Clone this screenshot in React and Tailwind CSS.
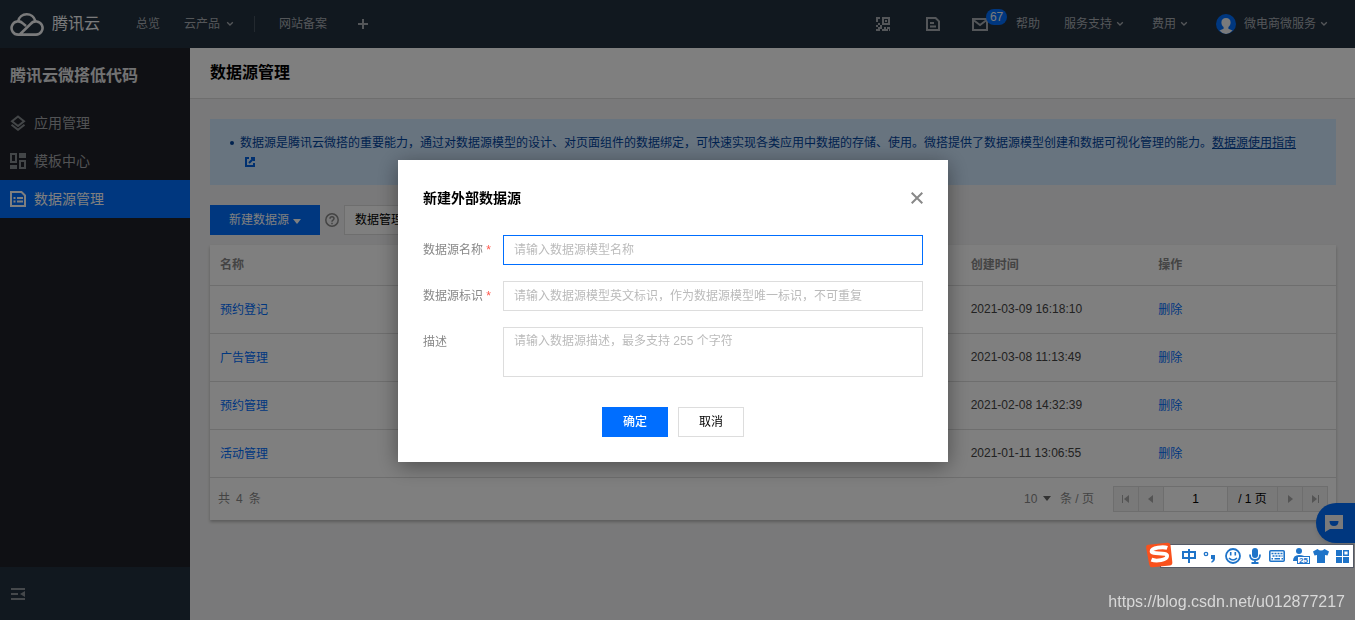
import { useState } from "react";

const rows = [
    { name: "预约登记", time: "2021-03-09 16:18:10" },
    { name: "广告管理", time: "2021-03-08 11:13:49" },
    { name: "预约管理", time: "2021-02-08 14:32:39" },
    { name: "活动管理", time: "2021-01-11 13:06:55" },
];

function Chevron() {
    return (
        <svg width="8" height="6" viewBox="0 0 8 6" fill="none" stroke="currentColor" strokeWidth="1.3">
            <path d="M1.2 1.2 4 4l2.8-2.8" />
        </svg>
    );
}

function CloudLogo() {
    return (
        <svg width="34" height="26" viewBox="0 0 34 26" fill="none" stroke="currentColor" strokeWidth="2.6">
            <path d="M10 23.2 20.7 13a6.6 6.6 0 1 1 4.8 10.6H8.2A6.6 6.6 0 1 1 12.9 12.4L16 15" />
            <path d="M8.2 10.2a8.8 8.8 0 0 1 17.1-.4" />
        </svg>
    );
}

function QrIcon() {
    return (
        <svg width="14" height="14" viewBox="0 0 14 14" fill="currentColor">
            <path d="M0 0h4v2H2v3H0zM6 0h8v8H6zm2 2v4h4V2z" fillRule="evenodd" />
            <path d="M9 3h2v2H9zM2 6h2v2H2zM0 8h2v2H0zM4 8h2v2H4zM2 10h4v2H4v2H0v-2h2zM8 10h2v2h2v2H6v-2h2zM11 10h3v4h-1v-2h-2z" />
        </svg>
    );
}

function DocIcon() {
    return (
        <svg width="14" height="14" viewBox="0 0 14 14" fill="none" stroke="currentColor" strokeWidth="2">
            <path d="M1 1h8.6L13 4.4V13H1z" />
            <path d="M4 6h4M4 9.5h6" />
        </svg>
    );
}

function MailIcon() {
    return (
        <svg width="16" height="14" viewBox="0 0 16 14" fill="none" stroke="currentColor" strokeWidth="2">
            <path d="M1 2h14v11H1z" />
            <path d="m2 3.5 6 4.5 6-4.5" />
        </svg>
    );
}

function Avatar() {
    return (
        <svg width="20" height="20" viewBox="0 0 20 20">
            <circle cx="10" cy="10" r="10" fill="#006eff" />
            <path
                d="M10 4c2.9 0 4.6 1.8 4.6 4.4 0 2.1-1 3.7-2.2 4.6v1.8l4.2 1.8A10 10 0 0 1 10 20a10 10 0 0 1-6.6-3.4l4.2-1.8V13c-1.2-.9-2.2-2.5-2.2-4.6C5.400 5.800 7.100 4 10 4z"
                fill="#f4f5f6"
            />
        </svg>
    );
}

function AppsIcon() {
    return (
        <svg width="16" height="16" viewBox="0 0 16 16" fill="none" stroke="#878c90" strokeWidth="2">
            <path d="M8 1.500 14 6.200 8 11 2 6.200z" />
            <path d="M1.500 9.800 8 14.800l6.500-5" />
        </svg>
    );
}

function TemplateIcon() {
    return (
        <svg width="16" height="16" viewBox="0 0 16 16" fill="#878c90">
            <path d="M0 0h7v10H0zm2 2v6h3V2zM9 0h7v5H9zM0 12h7v4H0zM9 7h7v9H9zm2 2v5h3V9z" fillRule="evenodd" />
        </svg>
    );
}

function DataIcon() {
    return (
        <svg width="16" height="16" viewBox="0 0 16 16" fill="none" stroke="currentColor" strokeWidth="2">
            <path d="M1 1h10.500L15 4.500V15H1z" />
            <path d="M3.500 7h2M7 7h6M3.500 10.500h2M7 10.500h6" />
        </svg>
    );
}

function Header() {
    return (
        <header className="flex h-12 items-center bg-[#22303e] pr-[27px] pl-2.5 text-xs text-[#a8adb3]">
            <a href="#" className="flex items-center gap-2 text-base text-[#f4f5f6]">
                <CloudLogo />
                腾讯云
            </a>
            <nav className="ml-9 flex items-center gap-6">
                <a href="#">总览</a>
                <a href="#" className="flex items-center gap-1.5">
                    云产品
                    <Chevron />
                </a>
                <span className="-ml-1 h-4 w-px bg-[#47525e]" />
                <a href="#">网站备案</a>
                <button type="button" aria-label="添加" className="ml-1.5">
                    <svg width="12" height="12" viewBox="0 0 12 12" stroke="currentColor" strokeWidth="2">
                        <path d="M6 1v10M1 6h10" />
                    </svg>
                </button>
            </nav>
            <div className="ml-auto flex items-center">
                <button type="button" aria-label="二维码" className="mr-9">
                    <QrIcon />
                </button>
                <button type="button" aria-label="文档" className="mr-8">
                    <DocIcon />
                </button>
                <button type="button" aria-label="消息" className="relative mr-7">
                    <MailIcon />
                    <span className="absolute -top-2 left-3.5 h-4 rounded-full bg-[#006eff] px-1 leading-4 text-[#f4f5f6]">
                        67
                    </span>
                </button>
                <a href="#" className="mr-6">
                    帮助
                </a>
                <a href="#" className="mr-7 flex items-center gap-1">
                    服务支持
                    <Chevron />
                </a>
                <a href="#" className="mr-7 flex items-center gap-1">
                    费用
                    <Chevron />
                </a>
                <a href="#" className="flex items-center gap-1">
                    <span className="mr-1">
                        <Avatar />
                    </span>
                    微电商微服务
                    <Chevron />
                </a>
            </div>
        </header>
    );
}

function SideItem({ icon, label, active }) {
    return (
        <a
            href="#"
            className={
                active
                    ? "flex h-[38px] items-center gap-2 bg-[#006eff] px-2.5 text-white"
                    : "flex h-[38px] items-center gap-2 px-2.5 text-[#a4a6aa]"
            }
        >
            {icon}
            {label}
        </a>
    );
}

function Sidebar() {
    return (
        <aside className="flex w-[190px] shrink-0 flex-col bg-[#1e2028] text-sm">
            <h2 className="flex h-14 items-center px-2.5 text-base font-bold text-[#e4e5e7]">腾讯云微搭低代码</h2>
            <SideItem icon={<AppsIcon />} label="应用管理" />
            <SideItem icon={<TemplateIcon />} label="模板中心" />
            <SideItem icon={<DataIcon />} label="数据源管理" active />
            <div className="mt-auto flex h-[53px] items-center bg-[#22303e] px-[11px] text-[#8a9097]">
                <button type="button" aria-label="收起">
                    <svg width="14" height="12" viewBox="0 0 14 12" fill="currentColor">
                        <path d="M0 0h14v2H0zM0 5h7v2H0zM0 10h14v2H0zM14 3v6L9 6z" />
                    </svg>
                </button>
            </div>
        </aside>
    );
}

function Notice() {
    return (
        <div className="bg-[#d0e8ff] px-[30px] py-[15px] text-xs leading-[18px] text-[#00449e]">
            <div className="relative">
                <span className="absolute top-[7px] -left-2.5 size-1 rounded-full bg-[#00449e]" />
                数据源是腾讯云微搭的重要能力，通过对数据源模型的设计、对页面组件的数据绑定，可快速实现各类应用中数据的存储、使用。微搭提供了数据源模型创建和数据可视化管理的能力。
                <a href="#" className="underline">
                    数据源使用指南
                </a>
                <svg className="mx-[5px] inline-block text-[#0060e0]" width="10" height="10" viewBox="0 0 10 10" fill="none" stroke="currentColor" strokeWidth="2">
                    <path d="M4 1H1v8h8V6" />
                    <path d="M6 1h3v3M9 1 4 6" />
                </svg>
            </div>
        </div>
    );
}

function PageButton({ label, d }) {
    return (
        <button type="button" aria-label={label} className="flex w-[25px] items-center justify-center border-r border-[#ddd] text-[#a8a8a8]">
            <svg width="10" height="10" viewBox="0 0 10 10" fill="currentColor">
                <path d={d} />
            </svg>
        </button>
    );
}

function Pagination() {
    return (
        <div className="flex items-center justify-between px-2 py-2 text-xs text-[#888]">
            <span className="flex gap-1.5">
                <span>共</span>
                <span>4</span>
                <span>条</span>
            </span>
            <div className="flex items-center">
                <label className="relative mr-[19px] flex items-center">
                    <select className="mr-1 w-8 appearance-none" defaultValue="10">
                        <option>10</option>
                    </select>
                    <svg className="pointer-events-none absolute left-[19px]" width="8" height="5" viewBox="0 0 8 5" fill="#666">
                        <path d="M0 0h8L4 5z" />
                    </svg>
                    条 / 页
                </label>
                <div className="flex h-[26px] border border-r-0 border-[#ddd] bg-[#f2f2f2]">
                    <PageButton label="首页" d="M1 1h1v8H1zM8 1v8L3 5z" />
                    <PageButton label="上一页" d="M7 1v8L2 5z" />
                    <input aria-label="页码" defaultValue="1" className="w-16 border-r border-[#ddd] bg-white text-center text-black" />
                    <span className="flex w-[50px] items-center justify-center border-r border-[#ddd] text-black">/ 1 页</span>
                    <PageButton label="下一页" d="M3 1v8l5-4z" />
                    <PageButton label="末页" d="M8 1h1v8H8zM2 1v8l5-4z" />
                </div>
            </div>
        </div>
    );
}

function DataTable() {
    return (
        <div className="mt-2.5 bg-white text-xs shadow-[0_2px_3px_0_rgba(0,0,0,0.25)]">
            <table className="w-full table-fixed border-collapse text-left">
                <thead>
                    <tr className="h-10 border-b border-[#ddd] text-[#888]">
                        <th className="w-2/3 px-2.5 font-bold">名称</th>
                        <th className="w-1/6 px-2.5 font-bold">创建时间</th>
                        <th className="w-1/6 px-2.5 font-bold">操作</th>
                    </tr>
                </thead>
                <tbody>
                    {rows.map((row) => (
                        <tr key={row.name} className="h-12 border-b border-[#ddd]">
                            <td className="px-2.5 pt-0.5">
                                <a href="#" className="text-[#006eff]">
                                    {row.name}
                                </a>
                            </td>
                            <td className="px-2.5 text-[#444]">{row.time}</td>
                            <td className="px-2.5 pt-0.5">
                                <button type="button" className="text-[#006eff]">
                                    删除
                                </button>
                            </td>
                        </tr>
                    ))}
                </tbody>
            </table>
            <Pagination />
        </div>
    );
}

function CreateDialog() {
    const [form, setForm] = useState({ name: "", id: "", desc: "" });
    const set = (key) => (e) => setForm({ ...form, [key]: e.target.value });

    return (
        <div className="fixed inset-0 z-10 flex items-center justify-center bg-black/50 pt-0.5 pr-[9px]">
            <form
                role="dialog"
                aria-labelledby="dialog-title"
                onSubmit={(e) => e.preventDefault()}
                className="w-[550px] bg-white p-[25px] text-xs text-[#888] shadow-[0_4px_20px_rgba(0,0,0,0.4)]"
            >
                <div className="mb-6 flex h-[26px] items-center justify-between">
                    <h3 id="dialog-title" className="text-sm font-bold text-black">
                        新建外部数据源
                    </h3>
                    <button type="button" aria-label="关闭">
                        <svg width="12" height="12" viewBox="0 0 12 12" stroke="#888" strokeWidth="2">
                            <path d="m.700.700 10.600 10.600M11.300.700.700 11.300" />
                        </svg>
                    </button>
                </div>
                <div className="flex flex-col gap-4">
                    <div className="flex">
                        <label htmlFor="name" className="w-20 leading-[30px]">
                            数据源名称 <span className="text-[#ff584c]">*</span>
                        </label>
                        <input
                            id="name"
                            value={form.name}
                            onChange={set("name")}
                            placeholder="请输入数据源模型名称"
                            className="h-[30px] flex-1 border border-[#006eff] px-2.5 outline-none placeholder:text-[#bbb]"
                        />
                    </div>
                    <div className="flex">
                        <label htmlFor="id" className="w-20 leading-[30px]">
                            数据源标识 <span className="text-[#ff584c]">*</span>
                        </label>
                        <input
                            id="id"
                            value={form.id}
                            onChange={set("id")}
                            placeholder="请输入数据源模型英文标识，作为数据源模型唯一标识，不可重复"
                            className="h-[30px] flex-1 border border-[#ddd] px-2.5 outline-none placeholder:text-[#bbb]"
                        />
                    </div>
                    <div className="flex">
                        <label htmlFor="desc" className="w-20 leading-[30px]">
                            描述
                        </label>
                        <textarea
                            id="desc"
                            value={form.desc}
                            onChange={set("desc")}
                            placeholder="请输入数据源描述，最多支持 255 个字符"
                            className="h-[50px] flex-1 resize-none border border-[#ddd] px-2.5 py-1 leading-[18px] outline-none placeholder:text-[#bbb]"
                        />
                    </div>
                </div>
                <div className="mt-[30px] flex justify-center gap-2.5">
                    <button type="submit" className="h-[30px] w-[66px] bg-[#006eff] font-medium text-white">
                        确定
                    </button>
                    <button type="button" className="h-[30px] w-[66px] border border-[#ddd] text-black">
                        取消
                    </button>
                </div>
            </form>
        </div>
    );
}

function InputBar() {
    return (
        <div className="fixed right-px bottom-[52px] z-20 flex h-6 items-center border border-[#555a66] bg-white pr-1 pl-5 text-[#1f74c9]">
            <svg className="absolute -top-1 -left-4" width="30" height="29" viewBox="0 0 30 29">
                <g transform="rotate(-6 15 14)">
                    <path d="M4.500 2.500h19q3 0 3 3v17q0 3-3 3h-17q-3 0-3.200-3L2 5.500q-.2-3 2.500-3z" fill="#f9511d" />
                    <path d="M23 7.700c-4-1.900-15.500-1.800-16 1.800s15.500 2 15 6.200-11.500 4.400-16 2" fill="none" stroke="#fff" strokeWidth="3.800" />
                </g>
            </svg>
            <svg width="168" height="20" viewBox="0 0 168 20" fill="none" stroke="currentColor" strokeWidth="2">
                <path d="M2 6h12v6H2zM8 3v14" />
                <circle cx="25" cy="8" r="1.700" strokeWidth="1.300" />
                <path d="M30 9h4v3.500q0 3-3.300 4.200l-.6-.9q1.600-.8 1.700-2.800H30z" fill="currentColor" stroke="none" />
                <circle cx="52" cy="10" r="7" strokeWidth="1.800" />
                <path d="M49.700 6v3.500M54.300 6v3.500M48 12q4 4 8 0" strokeWidth="1.600" />
                <rect x="71" y="2" width="6" height="10" rx="3" fill="currentColor" stroke="none" />
                <path d="M69 8.500q0 5.500 5 5.500t5-5.500M74 14v3M70.500 17h7" strokeWidth="1.800" />
                <rect x="88.800" y="4.800" width="14.400" height="10.400" rx="1" strokeWidth="1.600" />
                <path d="M90.500 7.500h11M91.500 10h10" strokeWidth="1.500" strokeDasharray="2 1" />
                <path d="M90.500 12.700h1.500M93.500 12.700h5.500M100.500 12.700h1.500" strokeWidth="1.500" />
                <circle cx="118" cy="5" r="3" fill="currentColor" stroke="none" />
                <path d="M112 15q0-6 6-6t6 3v3z" fill="currentColor" stroke="none" />
                <rect x="116.500" y="10.500" width="12" height="7" fill="#fff" strokeWidth="1" />
                <text x="118" y="17" fontSize="8" fontWeight="bold" fill="currentColor" stroke="none">
                    25
                </text>
                <path d="M136.500 3q3.500 3 7 0l4.500 2.500-1.500 4-2.500-.5v8h-8V9l-2.500.5-1.500-4z" fill="currentColor" stroke="none" />
                <path d="M155 4h6v6h-6zM155 11h6v6h-6zM162 11h6v6h-6z" fill="currentColor" stroke="none" />
                <path d="M162.700 4.700h4.600v4.600h-4.600z" strokeWidth="1.400" />
            </svg>
        </div>
    );
}

export default function App() {
    return (
        <div className="flex min-h-screen flex-col bg-[#f3f3f4] font-['Liberation_Sans','Noto_Sans_CJK_SC',sans-serif]">
            <Header />
            <div className="flex flex-1">
                <Sidebar />
                <main className="min-w-0 flex-1">
                    <div className="flex h-[51px] items-center border-b border-[#ddd] bg-white px-5">
                        <h1 className="text-base font-bold text-black">数据源管理</h1>
                    </div>
                    <div className="py-5 pr-[19px] pl-5">
                        <Notice />
                        <div className="mt-5 flex items-center text-xs">
                            <button type="button" className="flex h-[30px] w-[110px] items-center justify-center gap-1 bg-[#006eff] text-white">
                                新建数据源
                                <svg className="mt-0.5" width="8" height="5" viewBox="0 0 8 5" fill="currentColor">
                                    <path d="M0 0h8L4 5z" />
                                </svg>
                            </button>
                            <svg className="mx-[5px]" width="14" height="14" viewBox="0 0 14 14" fill="none" stroke="#888" strokeWidth="1.500">
                                <circle cx="7" cy="7" r="6.200" />
                                <path d="M5 5.800q0-2 2-2t2 1.800q0 1-1.200 1.700-.8.500-.8 1.400M7 9.700v1.500" />
                            </svg>
                            <button type="button" className="h-[30px] border border-[#ddd] bg-white px-2.5 text-black">
                                数据管理
                            </button>
                        </div>
                        <DataTable />
                    </div>
                </main>
            </div>
            <button
                type="button"
                aria-label="在线咨询"
                className="fixed right-0 bottom-[77px] flex h-10 w-[39px] items-center rounded-l-full bg-[#006eff] pl-[9px] shadow-md"
            >
                <svg width="18" height="17" viewBox="0 0 18 17" fill="#f4f5f6">
                    <path d="M0 0h18v14H5l-5 3zM4.500 6q0 5 4.500 5t4.500-5z" fillRule="evenodd" />
                </svg>
            </button>
            <CreateDialog />
            <InputBar />
            <p className="fixed right-2.5 bottom-1.5 z-20 text-base leading-6 text-[#d8d8d8]">https://blog.csdn.net/u012877217</p>
        </div>
    );
}
